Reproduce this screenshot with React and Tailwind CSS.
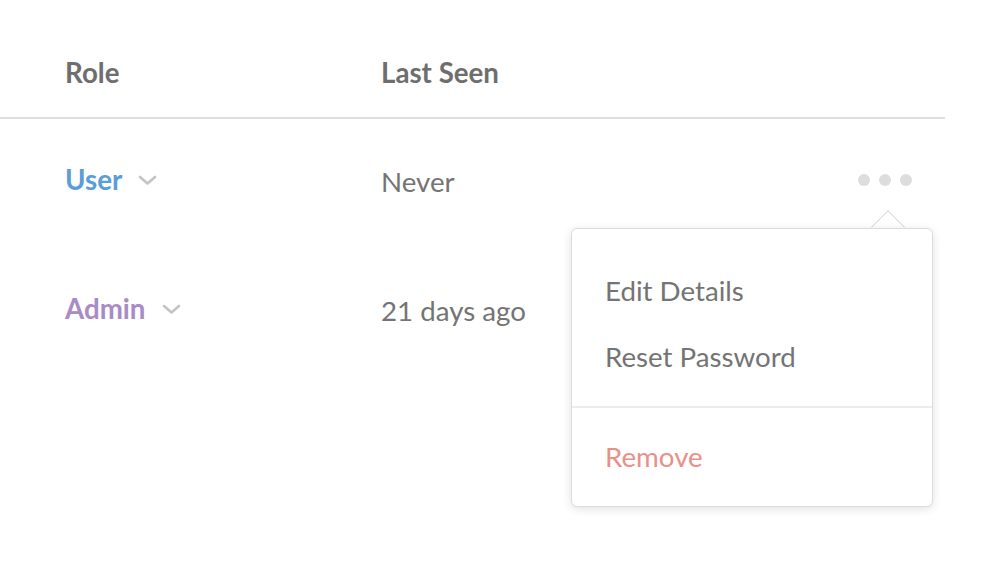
import React from 'react';

const rows = [
  { role: 'User', roleColor: 'text-[#5b9dd6]', seen: 'Never', open: true },
  { role: 'Admin', roleColor: 'text-[#a98bc6]', seen: '21 days ago', open: false },
];

const Chevron = () => (
  <svg width="19" height="12" viewBox="0 0 19 12" fill="none">
    <path d="M2 3l7.5 6.5L17 3" stroke="#c4c4c4" strokeWidth="2.6" strokeLinecap="round" strokeLinejoin="round" />
  </svg>
);

const ActionsMenu = () => (
  <div className="absolute left-[-287px] top-[54px] w-[362px] z-10">
    <div className="absolute right-[33px] top-[-13px] w-[24px] h-[24px] rotate-45 bg-white border-l border-t border-[#dcdcdc]" />
    <div className="relative bg-white border border-[#dcdcdc] rounded-[6px] shadow-[0_2px_10px_rgba(0,0,0,0.12)]">
      <div className="pt-[47px] pb-[34px] flex flex-col gap-[36px] px-[33px] text-[27.7px] text-[#747474]">
        <div className="leading-[30px]">Edit Details</div>
        <div className="leading-[30px]">Reset Password</div>
      </div>
      <div className="border-t-2 border-[#ececec] px-[33px] pt-[34px] pb-[34px] text-[27.7px] leading-[30px] text-[#e8908a]">
        Remove
      </div>
    </div>
  </div>
);

export default function App() {
  return (
    <div className="w-[1004px] h-[582px] bg-white overflow-hidden" style={{ fontFamily: 'Lato, "Open Sans", sans-serif' }}>
      <div className="w-[945px]">
        <div className="flex items-start h-[119px] pt-[56px] border-b-2 border-[#dedede] text-[27.7px] font-bold text-[#6e6e6e] leading-[34px]">
          <div className="w-[381px] pl-[65px]">Role</div>
          <div>Last Seen</div>
        </div>
        {rows.map((r, i) => (
          <div key={i} className={`flex items-center ${i === 0 ? 'h-[128px] -mt-[3px]' : 'h-[128px] mt-[1px]'}`}>
            <div className="w-[381px] pl-[65px] flex items-center gap-[16px]">
              <span className={`text-[27.7px] font-bold leading-[34px] ${r.roleColor}`}>{r.role}</span>
              <Chevron />
            </div>
            <div className="flex-1 text-[27.7px] text-[#747474] leading-[34px] pt-[4px]">{r.seen}</div>
            {r.open && (
              <div className="relative mr-[33px] flex gap-[9px]">
                <span className="w-[12px] h-[12px] rounded-full bg-[#dddddd]" />
                <span className="w-[12px] h-[12px] rounded-full bg-[#dddddd]" />
                <span className="w-[12px] h-[12px] rounded-full bg-[#dddddd]" />
                <ActionsMenu />
              </div>
            )}
          </div>
        ))}
      </div>
    </div>
  );
}
